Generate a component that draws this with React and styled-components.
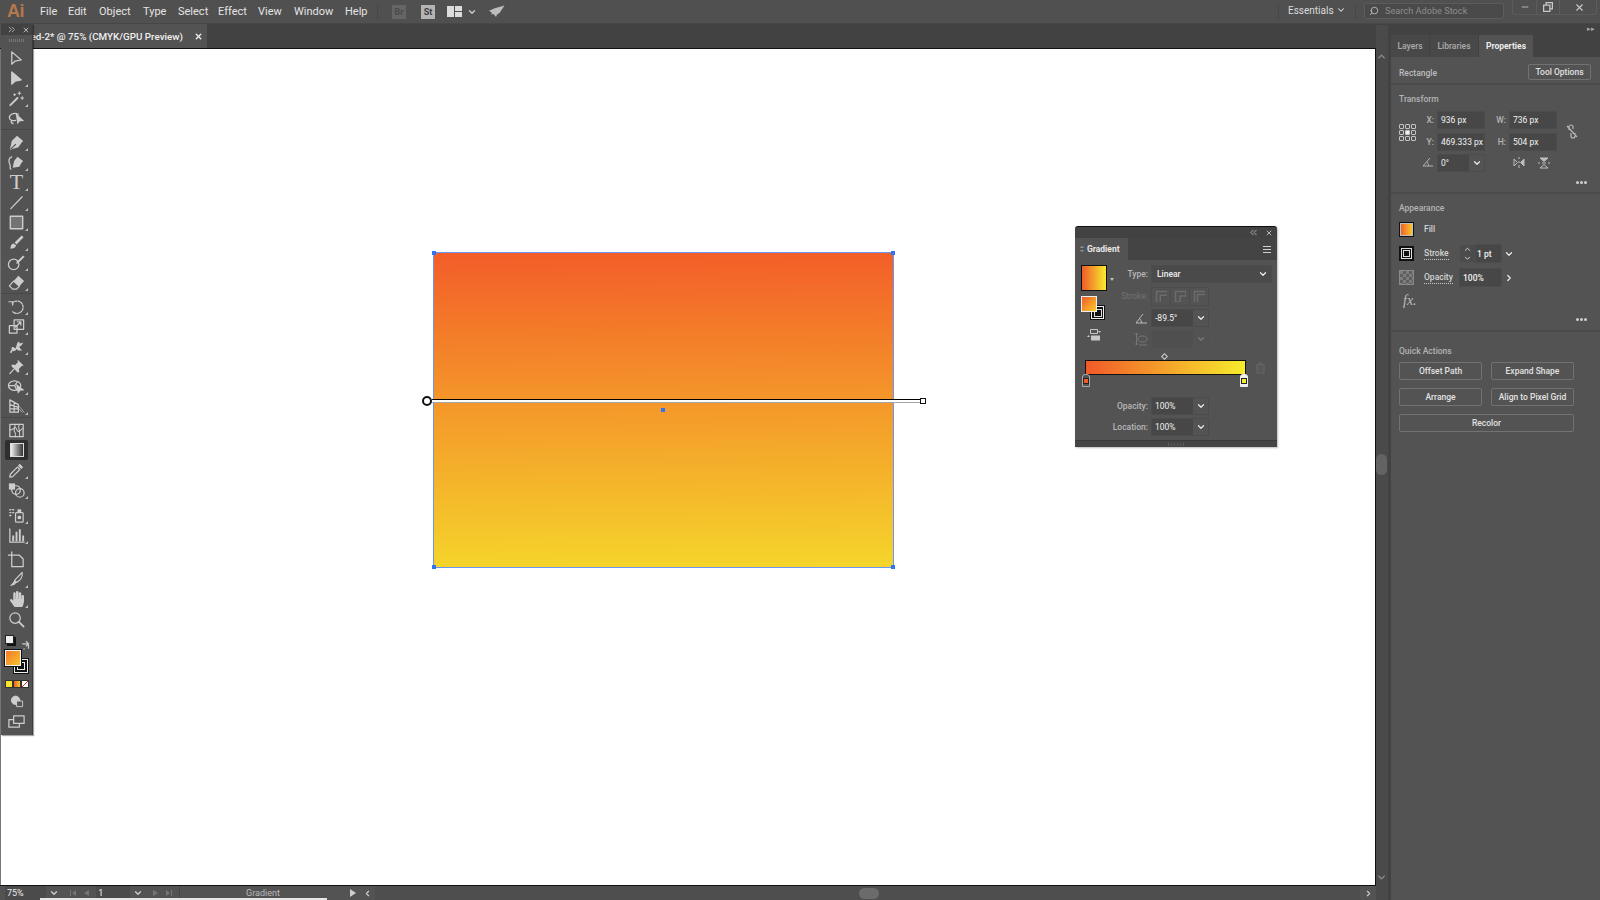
import React from 'react';
import styled, { createGlobalStyle } from 'styled-components';
import { Search, ChevronDown, ChevronRight, ChevronLeft, ChevronUp, X, Minus } from 'lucide-react';
import { FaHandPaper } from 'react-icons/fa';

const GlobalStyle = createGlobalStyle`
  html, body { margin: 0; padding: 0; background: #535353; overflow: hidden; }
  * { box-sizing: border-box; }
  body { font-family: Roboto, "Noto Sans", sans-serif; }
`;

const Shell = styled.div`
  position: relative;
  width: 1600px;
  height: 900px;
  display: flex;
  flex-direction: column;
  overflow: hidden;
  background: #535353;
  color: #d6d6d6;
`;

/* top menu bar */
const MenuBar = styled.div`
  height: 24px;
  flex: none;
  display: flex;
  align-items: center;
  background: #505050;
  border-bottom: 1px solid #474747;
`;

const Logo = styled.div`
  width: 40px;
  padding-left: 7px;
  font-family: "Liberation Sans", sans-serif;
  font-size: 18px;
  font-weight: 700;
  color: #b5784e;
  letter-spacing: -0.5px;
`;

const MenuItem = styled.div`
  font-size: 11px;
  color: #e4e4e4;
  width: ${p => p.$w}px;
`;

const MenuSep = styled.div`
  width: 1px;
  height: 16px;
  background: #474747;
  margin: ${p => p.$m || '0'};
`;

const AppBadge = styled.div`
  width: 14px;
  height: 14px;
  font-size: 9px;
  font-weight: 700;
  line-height: 14px;
  text-align: center;
  background: ${p => (p.$on ? '#b4b4b4' : '#656565')};
  color: ${p => (p.$on ? '#3c3c3c' : '#4b4b4b')};
  margin-left: ${p => p.$ml}px;
`;

const LayoutIcon = styled.div`
  margin-left: 12px;
  width: 15px;
  height: 11px;
  display: grid;
  grid-template-columns: 7px 7px;
  grid-template-rows: 5px 5px;
  gap: 1px;
  & > i { background: #dcdcdc; }
  & > i:first-child { grid-row: 1 / 3; }
`;

const MenuRight = styled.div`
  margin-left: auto;
  display: flex;
  align-items: center;
  height: 100%;
`;

const Essentials = styled.div`
  width: 76px;
  font-size: 10px;
  color: #dcdcdc;
  display: flex;
  align-items: center;
  justify-content: space-between;
  padding: 0 9px 0 9px;
  margin-top: -3px;
`;

const SearchBox = styled.div`
  margin-left: 8px;
  width: 140px;
  height: 16px;
  margin-top: -2px;
  display: flex;
  align-items: center;
  gap: 6px;
  padding-left: 4px;
  font-size: 9.2px;
  color: #8c8c8c;
  background: #4a4a4a;
  border: 1px solid #5c5c5c;
  border-radius: 2px;
`;

const WindowControls = styled.div`
  margin-left: 8px;
  margin-right: 3px;
  align-self: flex-start;
  width: 85px;
  height: 15px;
  display: grid;
  grid-template-columns: 23px 23px 39px;
  border: 1px solid #5c5c5c;
  border-top: none;
  border-radius: 0 0 3px 3px;
  & > div {
    display: flex;
    align-items: center;
    justify-content: center;
    color: #c8c8c8;
    border-left: 1px solid #5c5c5c;
  }
  & > div:first-child { border-left: none; }
`;

/* workspace */
const Body = styled.div`
  flex: 1;
  min-height: 0;
  display: flex;
`;

const Workspace = styled.div`
  width: 1376px;
  flex: none;
  display: flex;
  flex-direction: column;
`;

const TabBar = styled.div`
  height: 25px;
  flex: none;
  background: #424242;
  border-bottom: 1px solid #111;
`;

const DocTab = styled.div`
  width: 207px;
  height: 24px;
  background: #535353;
  display: flex;
  align-items: center;
  padding-left: 7px;
  justify-content: space-between;
  padding-right: 2px;
  font-size: 9.8px;
  font-weight: 500;
  color: #f0f0f0;
  white-space: nowrap;
`;

const Canvas = styled.div`
  position: relative;
  flex: 1;
  background: #fff;
  border-right: 1px solid #111;
  border-left: 1px solid #777;
`;

const Shape = styled.div`
  position: absolute;
  left: 432px;
  top: 203px;
  width: 461px;
  height: 316px;
  border: 1px solid #6a96f2;
  background: linear-gradient(179.5deg, #f35d29 0%, #f49a2a 50%, #f5d52b 100%);
`;

const Handle = styled.i`
  position: absolute;
  width: 4px;
  height: 4px;
  background: #2f74f5;
  ${p => (p.$top ? 'top: -2px;' : 'bottom: -2px;')}
  ${p => (p.$left ? 'left: -2px;' : 'right: -2px;')}
`;

const GradientLine = styled.div`
  position: absolute;
  left: 431px;
  top: 350px;
  width: 488px;
  height: 4px;
  background: #fff;
  border-top: 1px solid #000;
  border-bottom: 1px solid rgba(0, 0, 0, 0.35);
`;

const LineStart = styled.i`
  position: absolute;
  left: 421px;
  top: 347px;
  width: 10px;
  height: 10px;
  border: 2px solid #111;
  border-radius: 50%;
  background: #fff;
`;

const LineEnd = styled.i`
  position: absolute;
  left: 919px;
  top: 349px;
  width: 6px;
  height: 6px;
  border: 1.5px solid #111;
  background: #fff;
`;

const CenterDot = styled.i`
  position: absolute;
  left: 660px;
  top: 359px;
  width: 4px;
  height: 4px;
  background: #2f74f5;
`;

const StatusBar = styled.div`
  position: relative;
  height: 15px;
  flex: none;
  display: flex;
  align-items: center;
  background: #535353;
  border-top: 1px solid #111;
  font-size: 9px;
  color: #d4d4d4;
`;

const ZoomField = styled.div`
  width: 41px;
  margin-left: 5px;
  padding-left: 2px;
  height: 14px;
  line-height: 14px;
  background: #4b4b4b;
  color: #eee;
`;

const StatusCell = styled.div`
  width: ${p => p.$w}px;
  height: 14px;
  display: flex;
  align-items: center;
  justify-content: ${p => p.$j || 'center'};
  gap: 5px;
  flex: none;
  color: ${p => p.$c || '#cfcfcf'};
  background: ${p => p.$bg || 'transparent'};
  border-right: ${p => (p.$line ? '1px solid #474747' : 'none')};
`;

const Track = styled.div`
  flex: 1;
  height: 14px;
  background: #4e4e4e;
  display: flex;
  align-items: center;
  justify-content: center;
  padding-left: 2px;
`;

const Thumb = styled.div`
  width: 20px;
  height: 11px;
  border-radius: 6px;
  background: #6b6b6b;
`;

const PageEdge = styled.i`
  position: absolute;
  left: 40px;
  bottom: 0;
  width: 287px;
  height: 2px;
  background: #e6e6e6;
`;

const ScrollRail = styled.div`
  width: 15px;
  flex: none;
  display: flex;
  flex-direction: column;
  align-items: center;
  padding: 0 2px 0 0;
  background: #4a4a4a;
  border-right: 3px solid #424242;
  color: #8e8e8e;
  border-top: 1px solid #424242;
`;

const RailThumb = styled.div`
  width: 11px;
  height: 21px;
  border-radius: 6px;
  background: #636363;
  margin-top: 392px;
`;

/* right hand properties panel */
const RightPanel = styled.div`
  flex: 1;
  display: flex;
  flex-direction: column;
  background: #535353;
`;

const DockHeader = styled.div`
  height: 11px;
  background: #424242;
  color: #a8a8a8;
  font-size: 7px;
  line-height: 11px;
  text-align: right;
  padding-right: 5px;
`;

const Tabs = styled.div`
  height: 22px;
  display: flex;
  background: #424242;
`;

const Tab = styled.div`
  width: ${p => p.$w}px;
  display: flex;
  align-items: center;
  justify-content: center;
  font-size: 8.5px;
  font-weight: ${p => (p.$on ? 700 : 500)};
  color: ${p => (p.$on ? '#ececec' : '#acacac')};
  background: ${p => (p.$on ? '#535353' : '#484848')};
  margin-right: 1px;
`;

const Section = styled.div`
  height: ${p => p.$h}px;
  flex: none;
  padding: 0 0 0 8px;
  border-bottom: ${p => (p.$last ? 'none' : '2px solid #4a4a4a')};
`;

const TitleRow = styled.div`
  height: 100%;
  margin-top: 2px;
  display: flex;
  align-items: center;
  justify-content: space-between;
  padding-right: 9px;
  font-size: 8.5px;
  font-weight: 500;
  color: #bdbdbd;
  & > span { padding-top: 2px; }
`;

const SmallLabel = styled.div`
  font-size: 8.5px;
  font-weight: 500;
  color: #b4b4b4;
  line-height: 12px;
  padding-top: ${p => p.$pt || 7}px;
`;

const Button = styled.div`
  height: ${p => p.$h || 17}px;
  width: ${p => p.$w ? `${p.$w}px` : 'auto'};
  display: flex;
  align-items: center;
  justify-content: center;
  border: 1px solid #727272;
  border-radius: 2px;
  font-size: 8.5px;
  font-weight: 500;
  color: #e2e2e2;
  ${p => p.$wide && 'grid-column: 1 / 3;'}
`;

const TransformGrid = styled.div`
  display: grid;
  grid-template-columns: 16px 23px 46px 26px 46px 32px;
  grid-template-rows: 16px 17px 16px;
  row-gap: 5px;
  margin-top: 7px;
  align-items: center;
`;

const RefPoint = styled.div`
  grid-column: 1;
  grid-row: 1 / 3;
  display: grid;
  grid-template-columns: repeat(3, 5px);
  grid-template-rows: repeat(3, 5px);
  gap: 1px;
  margin-top: 2px;
  & > i { border: 1px solid #c4c4c4; border-radius: 1px; }
  & > i:nth-child(5) { background: #f0f0f0; }
`;

const AxisLabel = styled.div`
  font-size: 8.5px;
  font-weight: 500;
  color: #b4b4b4;
  text-align: right;
  padding-right: 4px;
  ${p => p.$second && 'grid-column: 2;'}
`;

const InputBox = styled.div`
  height: ${p => p.$h || 16}px;
  width: ${p => p.$w ? `${p.$w}px` : 'auto'};
  padding-left: ${p => p.$pl ?? 3}px;
  display: flex;
  align-items: center;
  font-size: 8.5px;
  color: #f2f2f2;
  background: #474747;
  outline: 1px solid #4c4c4c;
  white-space: nowrap;
`;

const ComboBox = styled.div`
  height: 16px;
  width: ${p => p.$w}px;
  display: flex;
  outline: 1px solid #4c4c4c;
  font-size: 8.5px;
  color: #f2f2f2;
  opacity: ${p => (p.$off ? 0.25 : 1)};
`;

const ComboValue = styled.div`
  flex: 1;
  background: #474747;
  padding-left: 3px;
  display: flex;
  align-items: center;
`;

const ComboArrow = styled.div`
  width: 15px;
  display: flex;
  align-items: center;
  justify-content: center;
  color: #e8e8e8;
  border-left: 1px solid #535353;
`;

const FlipGroup = styled.div`
  grid-column: 4 / 6;
  display: flex;
  gap: 13px;
  padding-left: 29px;
  color: #bdbdbd;
`;

const LinkCell = styled.div`
  grid-column: 6;
  grid-row: 1 / 3;
  padding-left: 9px;
  color: #b8b8b8;
  margin-top: 5px;
`;

const MoreDots = styled.div`
  display: flex;
  justify-content: flex-end;
  gap: 1px;
  padding-right: 13px;
  margin-top: ${p => p.$mt}px;
  & > i { width: 3px; height: 3px; border-radius: 50%; background: #cfcfcf; }
`;

const AppearanceRow = styled.div`
  display: grid;
  grid-template-columns: 25px 36px auto;
  align-items: center;
  height: 16px;
  margin-top: ${p => p.$mt}px;
  font-size: 8.5px;
  font-weight: 500;
  color: #d2d2d2;
`;

const DottedLabel = styled.span`
  border-bottom: 1px dotted #c8c8c8;
  line-height: 11px;
  justify-self: start;
`;

const FillChip = styled.div`
  width: 15px;
  height: 15px;
  border: 1px solid #111;
  outline: 1px solid #c0c0c0;
  outline-offset: -2px;
  background: linear-gradient(90deg, #f15a29, #f7ce2c);
`;

const StrokeChip = styled.div`
  width: 15px;
  height: 15px;
  background: #111;
  border: 2px solid #111;
  outline: 1px solid #ddd;
  outline-offset: -3px;
  display: flex;
  align-items: center;
  justify-content: center;
  & > i { width: 7px; height: 7px; border: 1px solid #ddd; }
`;

const OpacityChip = styled.div`
  width: 15px;
  height: 15px;
  border: 1px solid #8a8a8a;
  background: repeating-conic-gradient(#5f5f5f 0 25%, #7d7d7d 0 50%) 0 0 / 6px 6px;
`;

const Stepper = styled.div`
  width: 15px;
  height: 17px;
  display: flex;
  flex-direction: column;
  align-items: center;
  justify-content: center;
  color: #e0e0e0;
  background: #4c4c4c;
`;

const StrokeControls = styled.div`
  display: flex;
  align-items: center;
  gap: 1px;
  & > div:last-child { width: 12px; }
`;

const FxMark = styled.div`
  font-family: "Liberation Serif", serif;
  font-style: italic;
  font-size: 14px;
  color: #bdbdbd;
  line-height: 16px;
  margin: 8px 0 0 4px;
`;

const ActionGrid = styled.div`
  display: grid;
  grid-template-columns: 83px 83px;
  column-gap: 9px;
  row-gap: 8px;
  margin-top: 5px;
`;

/* floating gradient panel */
const GradientPanel = styled.div`
  position: absolute;
  left: 1074px;
  top: 177px;
  width: 202px;
  height: 221px;
  display: flex;
  flex-direction: column;
  background: #535353;
  border-top: 1px solid #111;
  border-radius: 3px 3px 0 0;
  box-shadow: 1px 1px 2px rgba(0, 0, 0, 0.25);
`;

const PanelTop = styled.div`
  height: 11px;
  background: #424242;
  border-radius: 3px 3px 0 0;
  display: flex;
  justify-content: flex-end;
  align-items: center;
  gap: 8px;
  padding-right: 4px;
  color: #b8b8b8;
`;

const PanelTabs = styled.div`
  height: 22px;
  display: flex;
  background: #444;
  align-items: stretch;
  justify-content: space-between;
`;

const PanelTab = styled.div`
  width: 53px;
  display: flex;
  align-items: center;
  gap: 3px;
  padding-left: 5px;
  background: #535353;
  font-size: 8.5px;
  font-weight: 700;
  color: #e8e8e8;
`;

const Burger = styled.div`
  width: 8px;
  margin: auto 6px auto 0;
  height: 7px;
  border-top: 1px solid #cfcfcf;
  border-bottom: 1px solid #cfcfcf;
  position: relative;
  &::after {
    content: '';
    position: absolute;
    left: 0;
    right: 0;
    top: 2px;
    height: 1px;
    background: #cfcfcf;
  }
`;

const PanelGrid = styled.div`
  display: grid;
  grid-template-columns: 38px 33px auto;
  grid-template-rows: 16px 18px 16px 16px;
  column-gap: 0;
  row-gap: 5px;
  padding: 6px 0 0 6px;
  align-items: center;
`;

const SwatchColumn = styled.div`
  grid-column: 1;
  grid-row: 1 / 5;
  align-self: start;
  position: relative;
  height: 80px;
  margin-top: -1px;
`;

const BigSwatch = styled.div`
  width: 26px;
  height: 26px;
  border: 1px solid #111;
  background: linear-gradient(90deg, #f15a29, #f7ec2c);
`;

const SwatchCaret = styled.i`
  position: absolute;
  left: 29px;
  top: 13px;
  border: 2px solid transparent;
  border-top: 3px solid #c0c0c0;
`;

const FillSquare = styled.div`
  position: absolute;
  top: 31px;
  left: 0;
  z-index: 1;
  width: 16px;
  height: 16px;
  border: 1px solid #eee;
  background: linear-gradient(135deg, #f15a29, #f7ce2c);
`;

const StrokeSquare = styled.div`
  position: absolute;
  top: 40px;
  left: 9px;
  width: 15px;
  height: 15px;
  background: #111;
  outline: 1px solid #eee;
  outline-offset: -2px;
  display: flex;
  align-items: center;
  justify-content: center;
  & > i { width: 8px; height: 8px; border: 1px solid #ddd; }
`;

const SwapIcon = styled.div`
  position: absolute;
  top: 61px;
  left: 6px;
  color: #c8c8c8;
`;

const RowLabel = styled.div`
  font-size: 8.5px;
  font-weight: 500;
  text-align: right;
  padding-right: 4px;
  color: ${p => (p.$off ? '#6c6c6c' : '#b8b8b8')};
  white-space: nowrap;
`;

const TypeSelect = styled.div`
  width: 119px;
  height: 16px;
  display: flex;
  align-items: center;
  justify-content: space-between;
  padding: 0 3px 0 5px;
  background: #4a4a4a;
  outline: 1px solid #4c4c4c;
  font-size: 8.5px;
  font-weight: 500;
  color: #eee;
`;

const StrokeModes = styled.div`
  display: flex;
  gap: 1px;
  width: 56px;
  height: 17px;
  & > div {
    flex: 1;
    outline: 1px solid #4c4c4c;
    display: flex;
    align-items: center;
    justify-content: center;
    color: #6c6c6c;
  }
`;

const IconCell = styled.div`
  display: flex;
  justify-content: flex-end;
  padding-right: 4px;
  color: ${p => (p.$off ? '#777' : '#bcbcbc')};
`;

const SliderArea = styled.div`
  position: relative;
  height: 46px;
  margin-top: 5px;
`;

const MidDiamond = styled.i`
  position: absolute;
  left: 87px;
  top: 2px;
  width: 5px;
  height: 5px;
  transform: rotate(45deg);
  border: 1px solid #cfcfcf;
`;

const Ramp = styled.div`
  position: absolute;
  left: 10px;
  top: 8px;
  width: 161px;
  height: 15px;
  border: 1px solid #111;
  background: linear-gradient(90deg, #f15a29, #f7ec2c);
`;

const Stop = styled.div`
  position: absolute;
  top: 22px;
  left: ${p => p.$x}px;
  width: 8px;
  height: 13px;
  border: 1px solid ${p => (p.$on ? '#eee' : '#aaa')};
  border-radius: 3px 3px 0 0;
  background: ${p => (p.$on ? '#eee' : 'transparent')};
  display: flex;
  align-items: center;
  justify-content: center;
  & > i { width: 4px; height: 4px; background: ${p => p.$c}; outline: 1px solid #222; }
`;

const Bin = styled.div`
  position: absolute;
  left: 180px;
  top: 7px;
  color: #696969;
`;

const FieldGrid = styled.div`
  display: grid;
  grid-template-columns: 77px auto;
  row-gap: 5px;
  align-items: center;
`;

const PanelBottom = styled.div`
  margin-top: auto;
  height: 7px;
  background: #454545;
  border-top: 1px solid #3a3a3a;
  display: flex;
  justify-content: center;
  align-items: center;
  &::after {
    content: '';
    width: 16px;
    height: 3px;
    background: repeating-linear-gradient(90deg, #5e5e5e 0 1px, transparent 1px 3px);
  }
`;

/* left tools panel */
const ToolPanel = styled.div`
  position: absolute;
  left: 1px;
  top: 24px;
  width: 32px;
  height: 711px;
  z-index: 5;
  background: #535353;
  border-right: 1px solid #3c3c3c;
  box-shadow: 1px 1px 1px rgba(0, 0, 0, 0.35);
  display: flex;
  flex-direction: column;
  align-items: center;
`;

const ToolHead = styled.div`
  align-self: stretch;
  height: 11px;
  background: #424242;
  display: flex;
  align-items: center;
  justify-content: space-between;
  padding: 0 2px 0 7px;
  color: #b4b4b4;
`;

const Gripper = styled.div`
  width: 16px;
  height: 3px;
  margin: 4px 0 6px;
  background: repeating-linear-gradient(90deg, #777 0 1px, transparent 1px 2px);
`;

const ToolGroup = styled.div`
  align-self: stretch;
  display: flex;
  flex-direction: column;
  align-items: center;
  margin-bottom: ${p => p.$mb || 0}px;
  ${p => p.$sep && 'border-bottom: 1px solid #484848; padding-bottom: 1px; margin-bottom: 2px;'}
`;

const ToolButton = styled.div`
  position: relative;
  width: 23px;
  height: 20px;
  margin-top: ${p => p.$mt || 0}px;
  display: flex;
  align-items: center;
  justify-content: center;
  color: #cdcdcd;
  background: ${p => (p.$on ? '#2f2f2f' : 'transparent')};
  border-radius: 2px;
  ${p => p.$corner && `
    &::after {
      content: '';
      position: absolute;
      right: 0;
      bottom: 1px;
      border-style: solid;
      border-width: 0 0 3px 3px;
      border-color: transparent transparent #bdbdbd transparent;
    }
  `}
`;

const ColorArea = styled.div`
  align-self: stretch;
  position: relative;
  height: 48px;
  margin-top: 3px;
`;

const MiniDefault = styled.div`
  position: absolute;
  left: 4px;
  top: 3px;
  width: 9px;
  height: 9px;
  background: #eee;
  border: 1px solid #222;
  box-shadow: 2px 2px 0 #111;
`;

const MiniSwap = styled.div`
  position: absolute;
  left: 20px;
  top: 3px;
  color: #c8c8c8;
`;

const ToolFill = styled.div`
  position: absolute;
  left: 4px;
  top: 18px;
  z-index: 1;
  width: 16px;
  height: 16px;
  border: 1px solid #f4f4f4;
  outline: 1px solid #111;
  background: linear-gradient(135deg, #f4792a, #f7c32c);
`;

const ToolStroke = styled.div`
  position: absolute;
  left: 12px;
  top: 26px;
  width: 16px;
  height: 16px;
  background: #111;
  outline: 1px solid #eee;
  outline-offset: -2px;
  display: flex;
  align-items: center;
  justify-content: center;
  & > i { width: 8px; height: 8px; border: 1px solid #eee; }
`;

const ModeRow = styled.div`
  align-self: stretch;
  margin: 0 0 0 4px;
  display: flex;
  height: 8px;
  flex: none;
  & > i { width: 8px; height: 8px; border: 1px solid #333; }
  & > i:nth-child(1) { background: #f6e52d; }
  & > i:nth-child(2) { background: linear-gradient(90deg, #f15a29, #f7ce2c); }
  & > i:nth-child(3) {
    background: linear-gradient(135deg, #fff 0 42%, #e8252a 42% 58%, #fff 58% 100%);
  }
`;

const Stroke = ({ children, size = 19, vb = 20 }) => (
  <svg width={size} height={size} viewBox={`0 0 ${vb} ${vb}`} fill="none" stroke="currentColor" strokeWidth="1.3" strokeLinejoin="round" strokeLinecap="round">
    {children}
  </svg>
);

const TOOL_ICONS = {
  select: <path d="M5 3v13l3.6-3.3L15 11.5z" />,
  direct: <path d="M5 3v13l3.6-3.3L15 11.5z" fill="currentColor" />,
  wand: (<><path d="M3.500 17L11 9.500" strokeWidth="2" /><path d="M13 3v3M11.500 4.500h3M16 8v3M14.500 9.500h3M8 5v2M7 6h2" strokeWidth="1" /></>),
  lasso: (<><path d="M12 5.500C7 3 2 6 2.500 9.500c.4 2.500 4 3.200 6.500 2.500M5 12c-1.600 1.500 0 3 1.500 3.500" /><path d="M9 4l2 12 2.500-3 4.500-.5z" fill="currentColor" stroke="none" /></>),
  pen: (<><path d="M10.500 3l6.500 5.500-1.500 1.500-3.500 5-9 2.500 2-9z" fill="currentColor" stroke="none" /><path d="M4.500 16.500l4.500-4.500" stroke="#535353" /></>),
  curve: (<><path d="M11 4l6 4.500-1.500 1.500-2.500 4.500-7 1 1.500-7z" fill="currentColor" stroke="none" /><path d="M5 4C1.500 5 1.500 9 3 12s-1 4 1 5" /></>),
  line: <path d="M4 16.500L16 4" />,
  rect: <rect x="3.500" y="3.500" width="13" height="13" fill="#737373" stroke="currentColor" strokeWidth="1.500" />,
  brush: (<><path d="M15.500 2.500l2 2-7.500 7.500-2-2z" fill="currentColor" stroke="none" /><path d="M7 11c-3 .5-3 3-3.500 5.500 3 0 5.500-.5 6-3.500z" fill="currentColor" stroke="none" /></>),
  shaper: (<><circle cx="7" cy="12" r="5.500" /><path d="M17 2.500l1.500 1.500-6.500 6.500-2.500 1 1-2.500z" fill="currentColor" stroke="none" /></>),
  eraser: (<><path d="M12 3l6 5.500-5 5.500-6-5.500z" fill="currentColor" stroke="none" /><path d="M7 8.500l6 5.500-3 3H6l-3.500-3.500z" /></>),
  rotate: (<><path d="M5.500 6.500A6.500 6.500 0 1 1 6 15.500" strokeDasharray="2 1.300" /><path d="M2 5l4 0 0 3.500" /></>),
  scale: (<><rect x="7.500" y="3" width="10" height="10" /><rect x="2.500" y="9" width="8" height="8" /><path d="M9 10.500l5-5M11 5h3.500v3.500" /></>),
  warp: <path d="M3 16l2-3c-1-1 0-3 1.500-2.500L9 12l2-6c1-1.500 2.500-1 2 .5 1 .5 3 0 4-1-.5 2.500-2 4-4 4.500.5 2 1.500 3 3 4-3 .5-5 0-6-1.500-1 2-3 3-4 2L4.500 17z" fill="currentColor" stroke="none" />,
  pin: (<><path d="M11 2.500l6.500 6.500-2 .5-3 3 .5 3-1.500 1-7-7 1-1.500 3 .5 3-3z" fill="currentColor" stroke="none" /><path d="M7 13l-4 4.500" /></>),
  builder: (<><ellipse cx="8" cy="9" rx="6.500" ry="5" /><path d="M2 9h6l3-4M8 9l2 4" /><path d="M9.500 7l2 10.500 2.500-3 4.500-.5z" fill="currentColor" stroke="none" /></>),
  perspective: (<><path d="M3 3l9 5v8H3zM3 8l9 3M3 12.500h9M7.500 5.500v10.500" /><path d="M13 10l5 6M13 13l3 3" strokeWidth="1" opacity="0.7" /></>),
  mesh: (<><rect x="3" y="3.500" width="14" height="13" /><path d="M3 9c3 2 4-3 6-2s1 4 3 4 3-3 5-3M8 3.500c2 3-2 6 0 8s0 3 1 5M13 3.500c-2 3 0 4 0 7s1 3 0 6" strokeWidth="1.100" /></>),
  eyedrop: (<><path d="M13.500 3l3.500 3.500-2 2-3.500-3.500z" fill="currentColor" stroke="none" /><path d="M11 6.500l2.500 2.500-7.500 7.500-3 .5.500-3z" /></>),
  blend: (<><rect x="2" y="2.500" width="6.500" height="6.500" fill="currentColor" stroke="none" /><circle cx="9.500" cy="9.500" r="4.500" /><circle cx="13.500" cy="12.500" r="4.500" /></>),
  spray: (<><rect x="9" y="7" width="8" height="10" rx="1" /><rect x="11" y="3.500" width="4" height="3.500" fill="currentColor" stroke="none" /><circle cx="13" cy="12" r="2" fill="currentColor" stroke="none" /><path d="M3 4h1M6 4h1M3 7h1M6 7h1M3 10h1" strokeWidth="1.500" /></>),
  chart: (<><path d="M3 3v14h15" /><path d="M6.500 16V10M10 16V6M13.500 16V3.500M17 16v-6" strokeWidth="2" strokeLinecap="butt" /></>),
  artboard: (<><path d="M5 5.500h8l4 4v8H5z" /><path d="M5 2v3.500H1.500" /></>),
  slice: (<><path d="M16 2.500c.5 5-2.500 9-6 10.500l-2-2z" /><path d="M8 11l-5 6 5-1.500 2-2.500" fill="currentColor" stroke="none" /></>),
  zoom: (<><circle cx="8.500" cy="8.500" r="5.500" /><path d="M12.500 12.500l5 5" strokeWidth="1.800" /></>)
};

const GradientGlyph = styled.div`
  width: 14px;
  height: 14px;
  border: 1px solid #ddd;
  background: linear-gradient(90deg, #eee, #333);
`;

const TypeGlyph = styled.span`
  font-family: "Liberation Serif", serif;
  font-size: 22px;
  line-height: 20px;
  font-weight: 400;
  color: #cdcdcd;
`;

const NO_CORNER = ['select', 'lasso', 'mesh', 'gradient', 'artboard', 'zoom'];

const ToolIcon = ({ name }) => {
  let glyph = <Stroke>{TOOL_ICONS[name]}</Stroke>;
  if (name === 'gradient') glyph = <GradientGlyph />;
  if (name === 'type') glyph = <TypeGlyph>T</TypeGlyph>;
  if (name === 'hand') glyph = <FaHandPaper size={16} />;
  return (
    <ToolButton $corner={!NO_CORNER.includes(name)} $on={name === 'gradient'}>
      {glyph}
    </ToolButton>
  );
};

const Tiny = ({ d, w = 8, h = 8, fill }) => (
  <svg width={w} height={h} viewBox="0 0 8 8" fill={fill ? 'currentColor' : 'none'} stroke={fill ? 'none' : 'currentColor'} strokeWidth="1">
    <path d={d} />
  </svg>
);

const Chev = () => <ChevronDown size={10} strokeWidth={3} />;

const Combo = ({ value, w = 56, off }) => (
  <ComboBox $w={w} $off={off}>
    <ComboValue>{value}</ComboValue>
    <ComboArrow><Chev /></ComboArrow>
  </ComboBox>
);

const menus = [['File', 28], ['Edit', 31], ['Object', 44], ['Type', 35], ['Select', 40], ['Effect', 40], ['View', 36], ['Window', 51], ['Help', 32]];

const App = () => (
  <Shell>
    <GlobalStyle />
    <MenuBar>
      <Logo>Ai</Logo>
      {menus.map(([m, w]) => <MenuItem key={m} $w={w}>{m}</MenuItem>)}
      <MenuSep />
      <AppBadge $ml={14}>Br</AppBadge>
      <AppBadge $ml={15} $on>St</AppBadge>
      <LayoutIcon><i /><i /><i /></LayoutIcon>
      <ChevronDown size={10} strokeWidth={3} color="#d0d0d0" style={{ marginLeft: 5 }} />
      <svg width="16" height="14" viewBox="0 0 16 14" style={{ marginLeft: 12 }} fill="#bdbdbd"><path d="M15.500 0.500L5 3.500 2 5l-2 .5L3 8l-1 1.500 2.500-.5L7 12l1-2.500 2.500-1.500z" /></svg>
      <MenuRight>
        <MenuSep />
        <Essentials>Essentials <ChevronDown size={10} strokeWidth={2.500} /></Essentials>
        <MenuSep />
        <SearchBox><Search size={10} color="#c4c4c4" strokeWidth={2} style={{ transform: 'scaleX(-1)' }} />Search Adobe Stock</SearchBox>
        <WindowControls>
          <div><Minus size={10} strokeWidth={2} /></div>
          <div><Tiny d="M.5 2.500h5v5h-5zM2.500 2.500v-2h5v5h-2" w={10} h={10} /></div>
          <div><X size={11} strokeWidth={2.500} /></div>
        </WindowControls>
      </MenuRight>
    </MenuBar>

    <Body>
      <Workspace>
        <TabBar>
          <DocTab>Untitled-2* @ 75% (CMYK/GPU Preview)<X size={9} strokeWidth={3.500} style={{ marginRight: 2 }} /></DocTab>
        </TabBar>
        <Canvas>
          <Shape>
            <Handle $top $left /><Handle $top /><Handle $left /><Handle />
          </Shape>
          <GradientLine />
          <LineStart />
          <LineEnd />
          <CenterDot />
          <GradientPanel>
            <PanelTop>
              <Tiny d="M4 1L1 4l3 3M7.500 1l-3 3 3 3" w={7} h={7} />
              <X size={8} strokeWidth={3} />
            </PanelTop>
            <PanelTabs>
              <PanelTab>
                <svg width="4" height="8" viewBox="0 0 4 8" fill="none" stroke="#bbb"><path d="M.5 3L2 1.500 3.500 3M.5 5L2 6.500 3.500 5" /></svg>
                Gradient
              </PanelTab>
              <Burger />
            </PanelTabs>
            <PanelGrid>
              <SwatchColumn>
                <BigSwatch />
                <SwatchCaret />
                <FillSquare />
                <StrokeSquare><i /></StrokeSquare>
                <SwapIcon>
                  <svg width="14" height="12" viewBox="0 0 14 12"><path d="M3.500.5h7v4h-7z" fill="#535353" stroke="currentColor" /><path d="M11 2h3l-1.500 2zM0 8h3L1.500 6z" fill="currentColor" /><path d="M4 6.500h9v5H4z" fill="currentColor" /></svg>
                </SwapIcon>
              </SwatchColumn>
              <RowLabel>Type:</RowLabel>
              <TypeSelect>Linear<Chev /></TypeSelect>
              <RowLabel $off>Stroke:</RowLabel>
              <StrokeModes>
                <div><Tiny d="M1 8V1h7M3.500 8V3.500H8" w={12} h={12} /></div>
                <div><Tiny d="M1 8V1h7v3H4v4z" w={12} h={12} /></div>
                <div><Tiny d="M1 8V1h7M3 8V3h5" w={12} h={12} /></div>
              </StrokeModes>
              <IconCell>
                <svg width="13" height="12" viewBox="0 0 13 12" fill="none" stroke="currentColor"><path d="M12 11H1l7-9M5 7c1 1 1.500 2.500 1.500 4" /></svg>
              </IconCell>
              <Combo value="-89.5°" />
              <IconCell $off>
                <svg width="14" height="14" viewBox="0 0 14 14" fill="none" stroke="currentColor"><ellipse cx="8.500" cy="7" rx="4.500" ry="3" /><path d="M2.500 1v12M1 2.500L2.500 1 4 2.500M1 11.500L2.500 13 4 11.500M5 13h8" /></svg>
              </IconCell>
              <Combo value="" off />
            </PanelGrid>
            <SliderArea>
              <MidDiamond />
              <Ramp />
              <Stop $x={7} $c="#f15a29"><i /></Stop>
              <Stop $x={165} $c="#f7ec2c" $on><i /></Stop>
              <Bin>
                <svg width="11" height="12" viewBox="0 0 11 12" fill="none" stroke="currentColor"><path d="M1 3h9M4 3V1h3v2M2 3v8h7V3M4 5v4M7 5v4" /></svg>
              </Bin>
            </SliderArea>
            <FieldGrid>
              <RowLabel>Opacity:</RowLabel>
              <Combo value="100%" />
              <RowLabel>Location:</RowLabel>
              <Combo value="100%" />
            </FieldGrid>
            <PanelBottom />
          </GradientPanel>
        </Canvas>
        <StatusBar>
          <ZoomField>75%</ZoomField>
          <StatusCell $w={16}><Chev /></StatusCell>
          <StatusCell $w={34} $c="#757575">
            <Tiny d="M1 1v6h1V1zM7 1v6L3 4z" fill />
            <Tiny d="M7 1v6L2 4z" fill />
          </StatusCell>
          <StatusCell $w={34} $bg="#4b4b4b" $j="flex-start" $c="#f0f0f0">&nbsp;1</StatusCell>
          <StatusCell $w={15}><Chev /></StatusCell>
          <StatusCell $w={35} $c="#757575" $line>
            <Tiny d="M1 1v6l5-3z" fill />
            <Tiny d="M1 1v6l4-3zM6 1v6h1V1z" fill />
          </StatusCell>
          <StatusCell $w={166} $c="#bcbcbc">Gradient</StatusCell>
          <StatusCell $w={14}><Tiny d="M1 0v8l6-4z" fill /></StatusCell>
          <StatusCell $w={15}><ChevronLeft size={9} strokeWidth={3} /></StatusCell>
          <Track><Thumb /></Track>
          <StatusCell $w={16}><ChevronRight size={9} strokeWidth={3} /></StatusCell>
          <PageEdge />
        </StatusBar>
      </Workspace>
      <ScrollRail>
        <ChevronUp size={11} strokeWidth={3} style={{ marginTop: 26 }} />
        <RailThumb />
        <ChevronDown size={11} strokeWidth={3} style={{ marginTop: 'auto', marginBottom: 17 }} />
      </ScrollRail>
      <RightPanel>
        <DockHeader>▸▸</DockHeader>
        <Tabs>
          <Tab $w={38}>Layers</Tab>
          <Tab $w={48}>Libraries</Tab>
          <Tab $w={54} $on>Properties</Tab>
        </Tabs>
        <Section $h={28}>
          <TitleRow><span>Rectangle</span><Button $w={63} $h={16}>Tool Options</Button></TitleRow>
        </Section>
        <Section $h={109}>
          <SmallLabel $pt={8}>Transform</SmallLabel>
          <TransformGrid>
            <RefPoint>{Array.from({ length: 9 }).map((_, i) => <i key={i} />)}</RefPoint>
            <AxisLabel>X:</AxisLabel>
            <InputBox>936 px</InputBox>
            <AxisLabel>W:</AxisLabel>
            <InputBox>736 px</InputBox>
            <LinkCell>
              <svg width="14" height="15" viewBox="0 0 14 15" fill="none" stroke="currentColor" strokeWidth="1.200"><path d="M4 6V3a2 2 0 0 1 4 0v2M6 9v3a2 2 0 0 0 4 0V9M2 2l10 11" /></svg>
            </LinkCell>
            <AxisLabel $second>Y:</AxisLabel>
            <InputBox>469.333 px</InputBox>
            <AxisLabel>H:</AxisLabel>
            <InputBox>504 px</InputBox>
            <AxisLabel $second>
              <svg width="12" height="10" viewBox="0 0 12 10" fill="none" stroke="currentColor"><path d="M11 9H1l7-8M5 5c1 1 1.500 2.500 1.500 4" /></svg>
            </AxisLabel>
            <Combo value="0°" w={46} />
            <FlipGroup>
              <svg width="12" height="11" viewBox="0 0 12 11" fill="none" stroke="currentColor"><path d="M6 0v2M6 4v2M6 8v3M1 2v7l3.500-3.500z" /><path d="M11 2v7L7.500 5.500z" fill="currentColor" /></svg>
              <svg width="12" height="12" viewBox="0 0 12 12" fill="none" stroke="currentColor"><path d="M0 6h2M4 6h4M10 6h2M2 11h8L6 7.500z" /><path d="M2 1h8L6 4.500z" fill="currentColor" /></svg>
            </FlipGroup>
          </TransformGrid>
          <MoreDots $mt={10}><i /><i /><i /></MoreDots>
        </Section>
        <Section $h={138}>
          <SmallLabel $pt={8}>Appearance</SmallLabel>
          <AppearanceRow $mt={7}><FillChip /><span>Fill</span></AppearanceRow>
          <AppearanceRow $mt={8}>
            <StrokeChip><i /></StrokeChip>
            <DottedLabel>Stroke</DottedLabel>
            <StrokeControls>
              <Stepper><ChevronUp size={9} strokeWidth={2.500} /><ChevronDown size={9} strokeWidth={2.500} /></Stepper>
              <InputBox $w={25} $h={17} $pl={1}>1 pt</InputBox>
              <ComboArrow><Chev /></ComboArrow>
            </StrokeControls>
          </AppearanceRow>
          <AppearanceRow $mt={8}>
            <OpacityChip />
            <DottedLabel>Opacity</DottedLabel>
            <StrokeControls>
              <InputBox $w={41} $h={17}>100%</InputBox>
              <ComboArrow><ChevronRight size={10} strokeWidth={3} /></ComboArrow>
            </StrokeControls>
          </AppearanceRow>
          <FxMark>fx.</FxMark>
          <MoreDots $mt={9}><i /><i /><i /></MoreDots>
        </Section>
        <Section $h={120} $last>
          <SmallLabel $pt={13}>Quick Actions</SmallLabel>
          <ActionGrid>
            <Button $h={18}>Offset Path</Button>
            <Button $h={18}>Expand Shape</Button>
            <Button $h={18}>Arrange</Button>
            <Button $h={18}>Align to Pixel Grid</Button>
            <Button $h={18} $wide>Recolor</Button>
          </ActionGrid>
        </Section>
      </RightPanel>
    </Body>

    <ToolPanel>
      <ToolHead>
        <Tiny d="M1 1l3 3-3 3M4.500 1l3 3-3 3" w={7} h={7} />
        <X size={8} strokeWidth={3} />
      </ToolHead>
      <Gripper />
      <ToolGroup $sep>
        {['select', 'direct', 'wand', 'lasso'].map(n => <ToolIcon key={n} name={n} />)}
      </ToolGroup>
      <ToolGroup $sep>
        {['pen', 'curve', 'type', 'line', 'rect', 'brush', 'shaper', 'eraser'].map(n => <ToolIcon key={n} name={n} />)}
      </ToolGroup>
      <ToolGroup $sep>
        {['rotate', 'scale', 'warp', 'pin', 'builder', 'perspective'].map(n => <ToolIcon key={n} name={n} />)}
      </ToolGroup>
      <ToolGroup $mb={5}>
        {['mesh', 'gradient', 'eyedrop', 'blend'].map(n => <ToolIcon key={n} name={n} />)}
      </ToolGroup>
      <ToolGroup $mb={4}>
        {['spray', 'chart'].map(n => <ToolIcon key={n} name={n} />)}
      </ToolGroup>
      <ToolGroup>
        {['artboard', 'slice', 'hand', 'zoom'].map(n => <ToolIcon key={n} name={n} />)}
      </ToolGroup>
      <ColorArea>
        <MiniDefault />
        <MiniSwap><Tiny d="M1 3h4l1 1v3M4 1l2 2-2 2M3 7l-1 0" w={10} h={10} /></MiniSwap>
        <ToolFill />
        <ToolStroke><i /></ToolStroke>
      </ColorArea>
      <ModeRow><i /><i /><i /></ModeRow>
      <ToolButton $mt={3}>
        <Stroke size={14}><circle cx="8" cy="9" r="6" fill="currentColor" /><rect x="10" y="10" width="8" height="8" fill="#535353" /></Stroke>
      </ToolButton>
      <ToolButton>
        <Stroke><rect x="2" y="8" width="11" height="8" /><rect x="7" y="4" width="11" height="8" fill="#535353" /></Stroke>
      </ToolButton>
    </ToolPanel>
  </Shell>
);

export default App;
